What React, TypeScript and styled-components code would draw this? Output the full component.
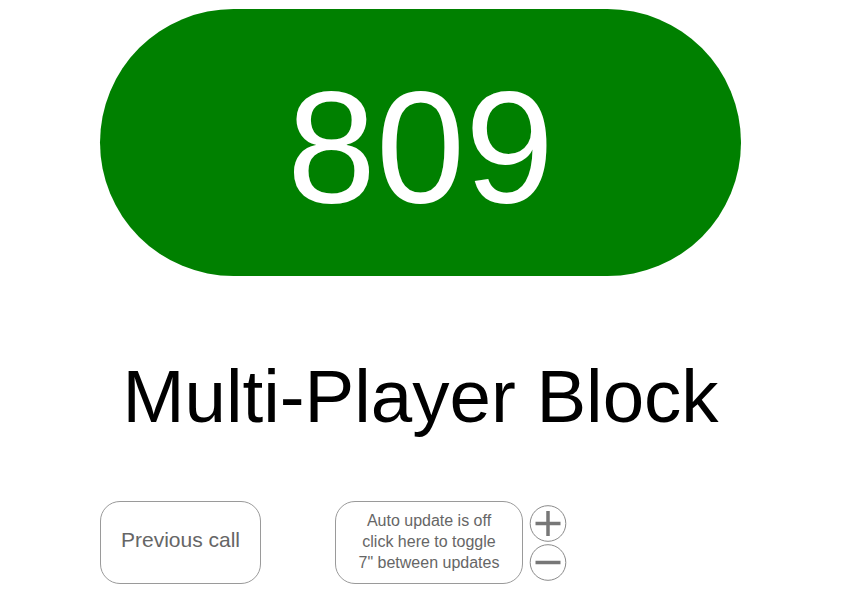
import React from "react";
import styled, { createGlobalStyle } from "styled-components";

const GlobalStyle = createGlobalStyle`
  body {
    margin: 0;
    background: #fff;
    font-family: "Liberation Sans", Arial, Helvetica, sans-serif;
  }
`;

const Page = styled.div`
  width: 641px;
  padding: 9px 0 0 100px;
`;

const Counter = styled.div`
  display: flex;
  justify-content: center;
  align-items: center;
  height: 267px;
  padding-top: 8px;
  box-sizing: border-box;
  border-radius: 134px;
  background: #008000;
  color: #fff;
  font-size: 160px;
  line-height: 1;
`;

const Title = styled.h1`
  margin: 84px 0 0 0;
  text-align: center;
  font-size: 74.5px;
  font-weight: 400;
  line-height: 74px;
  color: #000;
`;

const Controls = styled.div`
  display: flex;
  align-items: center;
  margin-top: 67px;
`;

const Button = styled.div<{ $width: number; $size: number; $lift: number }>`
  display: flex;
  justify-content: center;
  align-items: center;
  width: ${(p) => p.$width}px;
  height: 83px;
  padding-bottom: ${(p) => p.$lift}px;
  box-sizing: border-box;
  border: 1px solid #9a9a9a;
  border-radius: 20px;
  color: #666;
  font-size: ${(p) => p.$size}px;
  line-height: 21px;
  text-align: center;
  cursor: pointer;
`;

const Spacer = styled.div`
  width: 74px;
`;

const StepColumn = styled.div`
  display: flex;
  flex-direction: column;
  gap: 2px;
  margin-left: 6px;
`;

const StepButton = styled.svg`
  display: block;
  width: 38px;
  height: 37px;
  cursor: pointer;
`;

const Plus = () => (
  <StepButton viewBox="0 0 38 37">
    <circle cx="19" cy="18.5" r="17.8" fill="none" stroke="#8a8a8a" strokeWidth="1" />
    <line x1="6.5" y1="18.5" x2="31.5" y2="18.5" stroke="#777" strokeWidth="3.5" />
    <line x1="19" y1="6" x2="19" y2="31" stroke="#777" strokeWidth="3.5" />
  </StepButton>
);

const Minus = () => (
  <StepButton viewBox="0 0 38 37">
    <circle cx="19" cy="18.5" r="17.8" fill="none" stroke="#8a8a8a" strokeWidth="1" />
    <line x1="6.5" y1="18.5" x2="31.5" y2="18.5" stroke="#777" strokeWidth="3.5" />
  </StepButton>
);

const App: React.FC = () => {
  return (
    <>
      <GlobalStyle />
      <Page>
        <Counter>809</Counter>
        <Title>Multi-Player Block</Title>
        <Controls>
          <Button $width={161} $size={21} $lift={6}>
            Previous call
          </Button>
          <Spacer />
          <Button $width={188} $size={16} $lift={2}>
            Auto update is off
            <br />
            click here to toggle
            <br />
            7" between updates
          </Button>
          <StepColumn>
            <Plus />
            <Minus />
          </StepColumn>
        </Controls>
      </Page>
    </>
  );
};

export default App;
